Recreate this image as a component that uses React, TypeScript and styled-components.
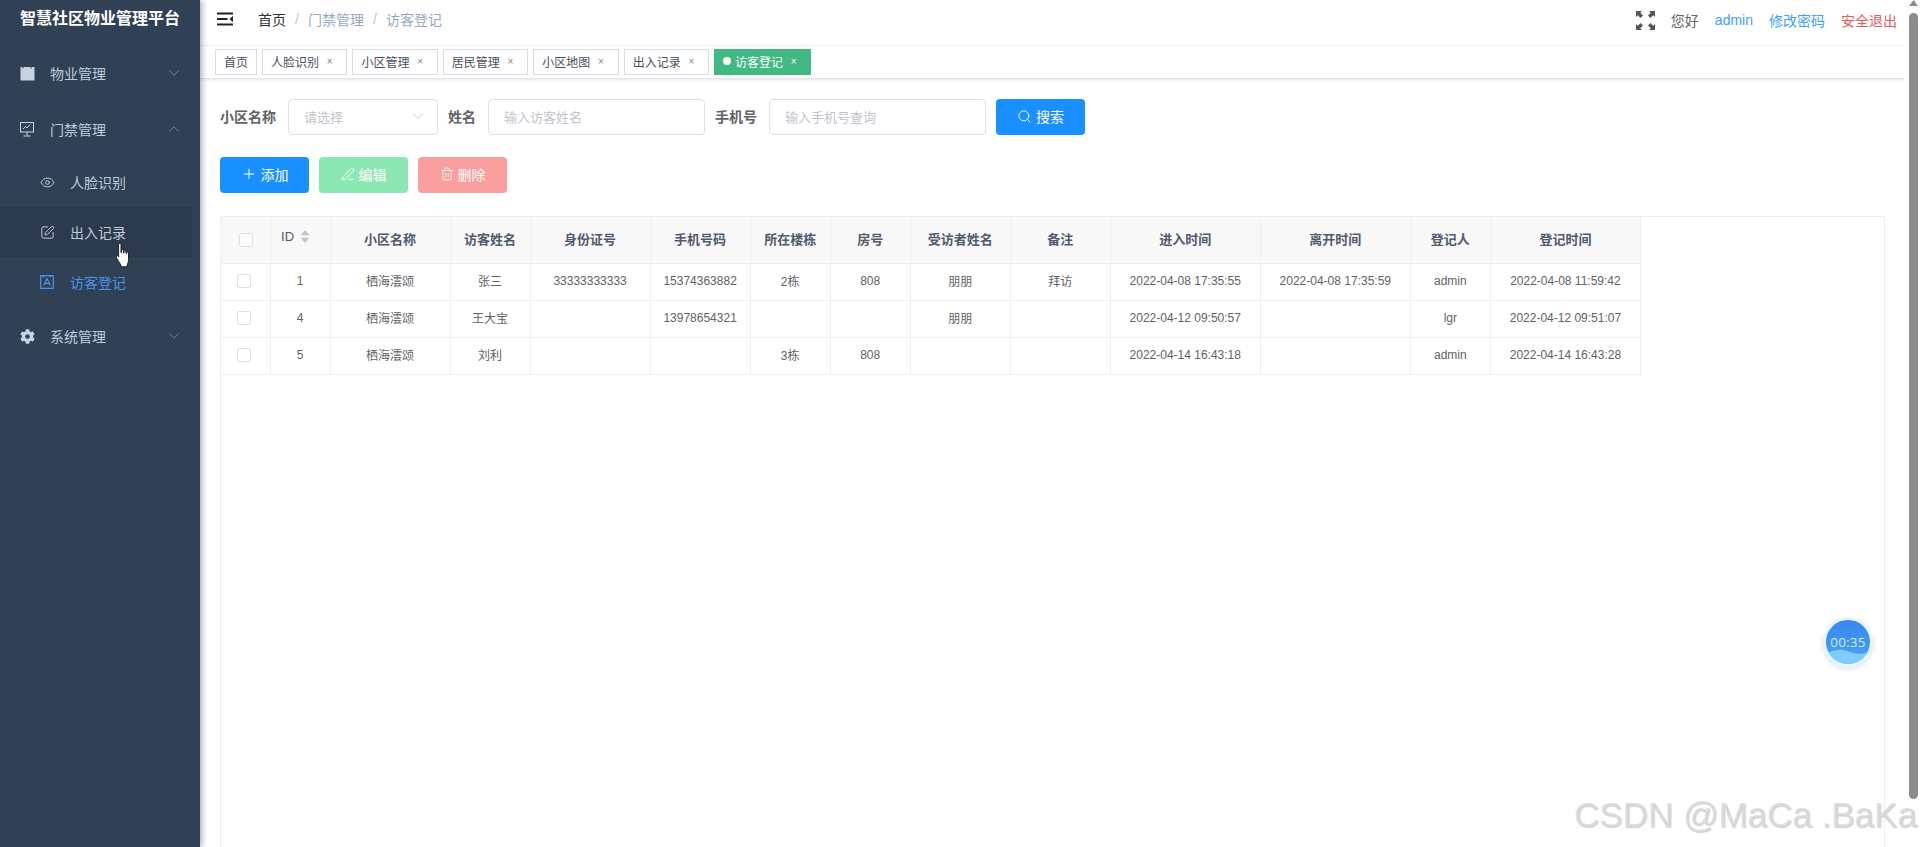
import React from "react";
import styled, { createGlobalStyle } from "styled-components";
import { ChevronDown, ChevronUp, Eye, Plus, Search, SquarePen, Trash2, PenLine } from "lucide-react";
import { FaCog } from "react-icons/fa";

const FONT = `"Liberation Sans", "Noto Sans CJK SC", sans-serif`;

const Global = createGlobalStyle`
  html, body { margin: 0; padding: 0; height: 100%; overflow: hidden; background: #fff; }
  body { font-family: ${FONT}; color: #606266; }
  * { box-sizing: border-box; }
`;

const Shell = styled.div`
  position: relative;
  display: grid;
  grid-template-columns: 200px 1fr 16px;
  width: 1920px;
  height: 847px;
  overflow: hidden;
`;

/* Sidebar */
const Sidebar = styled.aside`
  position: relative;
  z-index: 2;
  background: #304156;
  box-shadow: 2px 0 6px rgba(0, 21, 41, 0.35);
  color: #bfcbd9;
  font-size: 14px;
`;
const Brand = styled.div`
  height: 45px;
  padding-top: 9px;
  padding-left: 20px;
  color: #fff;
  font-size: 16px;
  font-weight: 700;
  line-height: 20px;
  white-space: nowrap;
`;
const MenuRow = styled.div`
  display: flex;
  align-items: center;
  height: 56px;
  padding: 0 17px 0 20px;
`;
const MenuIcon = styled.span`
  display: flex;
  width: 30px;
  flex: none;
  align-items: center;
  color: #c6d4e2;
`;
const MenuLabel = styled.span`
  flex: 1;
`;
const SubMenu = styled.div`
  margin-bottom: 1px;
`;
const SubRow = styled.div<{ $hover?: boolean; $active?: boolean }>`
  display: flex;
  align-items: center;
  height: 50px;
  padding-left: 40px;
  margin-right: 8px;
  background: ${(p) => (p.$hover ? "#2b3a4c" : "transparent")};
  color: ${(p) => (p.$active ? "#4a95e8" : "#bfcbd9")};
`;
const SubIcon = styled.span`
  display: flex;
  width: 30px;
  flex: none;
  align-items: center;
`;
const HandCursor = styled.svg`
  position: absolute;
  left: 115px;
  top: 243px;
  z-index: 3;
`;

/* Main column */
const Main = styled.main`
  display: flex;
  flex-direction: column;
  min-width: 0;
  height: 847px;
`;
const Header = styled.header`
  display: flex;
  align-items: center;
  height: 46px;
  padding: 0 7px 7px 17px;
  font-size: 14px;
  border-bottom: 1px solid #f4f4f4;
`;
const Crumbs = styled.nav`
  display: flex;
  flex: 1;
  align-items: center;
  margin-left: 25px;
  color: #97a8be;
`;
const Crumb = styled.span<{ $strong?: boolean }>`
  color: ${(p) => (p.$strong ? "#303133" : "#97a8be")};
`;
const CrumbSep = styled.span`
  width: 22px;
  line-height: 20px;
  text-align: center;
  color: #c0c4cc;
`;
const HeadLinks = styled.div`
  display: flex;
  align-items: center;
  gap: 16px;
  padding-top: 2px;
`;
const HeadLink = styled.span<{ $color: string }>`
  color: ${(p) => p.$color};
`;
const Tabs = styled.div`
  display: flex;
  gap: 5px;
  height: 33px;
  padding: 3px 0 0 15px;
  border-bottom: 1px solid #e2e4e8;
  box-shadow: 0 1px 3px rgba(0, 0, 0, 0.1);
`;
const Tab = styled.div<{ $active?: boolean }>`
  display: flex;
  align-items: center;
  height: 26px;
  padding: 0 8px 2px;
  font-size: 12px;
  border: 1px solid ${(p) => (p.$active ? "#42b983" : "#d8dce5")};
  background: ${(p) => (p.$active ? "#42b983" : "#fff")};
  color: ${(p) => (p.$active ? "#fff" : "#495060")};
`;
const TabDot = styled.i`
  width: 8px;
  height: 8px;
  margin-right: 4px;
  border-radius: 50%;
  background: #fff;
`;
const TabClose = styled.span<{ $active?: boolean }>`
  width: 19.4px;
  padding-left: 2px;
  text-align: center;
  font-size: 10px;
  color: ${(p) => (p.$active ? "#fff" : "#7c8492")};
`;
const Content = styled.section`
  display: flex;
  flex: 1;
  flex-direction: column;
  min-height: 0;
  padding: 20px 19px 0 20px;
`;
const Filters = styled.form`
  display: flex;
  align-items: center;
  height: 36px;
  margin: 0 0 22px;
`;
const FieldLabel = styled.label`
  margin-right: 12px;
  padding-bottom: 2px;
  font-size: 14px;
  font-weight: 700;
  color: #606266;
`;
const Field = styled.div<{ $width: number }>`
  display: flex;
  align-items: center;
  justify-content: space-between;
  width: ${(p) => p.$width}px;
  height: 36px;
  margin-right: 10px;
  padding: 0 9px 2px 15px;
  font-size: 13px;
  color: #c0c4cc;
  background: #fff;
  border: 1px solid #dcdfe6;
  border-radius: 4px;
`;
const Toolbar = styled.div`
  display: flex;
  gap: 10px;
  margin-bottom: 23px;
`;
const Btn = styled.button<{ $bg: string }>`
  display: flex;
  align-items: center;
  justify-content: center;
  gap: 4px;
  width: 89px;
  height: 36px;
  padding: 0 0 2px;
  font-family: ${FONT};
  font-size: 14px;
  color: #fff;
  background: ${(p) => p.$bg};
  border: 0;
  border-radius: 4px;
`;
const TableFrame = styled.div`
  flex: 1;
  min-height: 0;
  border: 1px solid #ebeef5;
  border-bottom: 0;
`;
const DataTable = styled.table`
  width: 1420px;
  table-layout: fixed;
  border-collapse: collapse;
  font-size: 12px;
`;
const Th = styled.th`
  height: 46px;
  padding: 0 0 2px;
  font-size: 13px;
  font-weight: 700;
  color: #515a6e;
  background: #f8f8f9;
  border: 1px solid #ebeef5;
  border-top: 0;
  &:first-child { border-left: 0; }
`;
const Td = styled.td`
  height: 37px;
  padding: 0 0 2px;
  text-align: center;
  color: #606266;
  border: 1px solid #ebeef5;
  &:first-child { border-left: 0; }
`;
const Check = styled.i<{ $head?: boolean }>`
  display: inline-block;
  width: 14px;
  height: 14px;
  vertical-align: middle;
  background: #fff;
  border: 1px solid #dcdfe6;
  border-radius: 2px;
  ${(p) => (p.$head ? "margin-left: 2px;" : "margin-left: -2px;")}
`;
const IdHead = styled.span`
  display: inline-flex;
  align-items: center;
  gap: 6px;
  padding-bottom: 5px;
  margin-left: -9px;
  font-weight: 400;
  font-size: 13px;
`;
const Scrollbar = styled.div`
  display: flex;
  flex-direction: column;
  align-items: center;
  padding: 0 0 48px 2px;
  background: #fff;
`;
const ScrollArrow = styled.svg`
  flex: none;
  margin-bottom: 7px;
`;
const ScrollThumb = styled.div`
  flex: 1;
  width: 9px;
  border-radius: 5px;
  background: #8b8b8b;
`;

/* Overlays */
const Timer = styled.div`
  position: absolute;
  left: 1823px;
  top: 617px;
  z-index: 4;
  display: flex;
  align-items: center;
  justify-content: center;
  width: 50px;
  height: 50px;
  overflow: hidden;
  border: 3px solid #e6f5ff;
  border-radius: 50%;
  box-shadow: 0 2px 5px rgba(90, 150, 210, 0.25);
  background: linear-gradient(180deg, #3a86ee 0%, #3f98f2 60%, #55aef5 100%);
`;
const TimerWave = styled.svg`
  position: absolute;
  left: 0;
  bottom: 0;
`;
const TimerText = styled.span`
  position: relative;
  font-family: "Open Sans", ${FONT};
  font-size: 13.5px;
  letter-spacing: 0.2px;
  color: #d2efff;
`;
const Watermark = styled.div`
  position: absolute;
  left: 1574px;
  top: 795px;
  z-index: 5;
  font-family: "Liberation Sans", sans-serif;
  font-size: 35px;
  line-height: 40px;
  white-space: nowrap;
  color: rgba(218, 218, 218, 0.8);
  text-shadow: 1px 1px 1px rgba(170, 170, 170, 0.55);
`;

const menuIconProps = { size: 15, strokeWidth: 1.6 };

const ClapIcon = () => (
  <svg width="15" height="15" viewBox="0 0 15 15">
    <path d="M0.5 1h2v1.6h1V1h7v1.6h1V1h3v13.5H.5z" fill="#c6d4e2" />
  </svg>
);
const MonitorIcon = () => (
  <svg width="14" height="15" viewBox="0 0 14 15" fill="none" stroke="#c6d4e2" strokeWidth="1">
    <rect x="0.5" y="0.5" width="13" height="9.5" />
    <path d="M3 7l2.5-2.5 1.5 1.5L10 2.5M7 10v4M3.5 14h7" />
  </svg>
);
const PortraitIcon = () => (
  <svg width="14" height="14" viewBox="0 0 14 14" fill="none" stroke="#4a95e8" strokeWidth="1.2">
    <path d="M.7.7h2.4v1h1V.7h5.8v1h1v-1h2.4v12.6H.7z" />
    <path d="M3.7 10.5L7 3.6l3.3 6.9M5 8.4h4" />
  </svg>
);
const MenuToggle = () => (
  <svg width="16" height="14" viewBox="0 0 16 14">
    <path d="M0 .5h16v1.9H0zM0 6h10.5v1.9H0zM0 11.6h16v1.9H0zM16 4v6l-3.6-3z" fill="#222" />
  </svg>
);
const Fullscreen = () => (
  <svg width="19" height="19" viewBox="0 0 19 19" fill="#555">
    <path d="M0 0h6L4.2 1.8 7 4.6 4.6 7 1.8 4.2 0 6zM19 0v6l-1.8-1.8L14.4 7 12 4.6l2.8-2.8L13 0zM0 19v-6l1.8 1.8L4.6 12 7 14.4l-2.8 2.8L6 19zM19 19h-6l1.8-1.8L12 14.4l2.4-2.4 2.8 2.8L19 13z" />
  </svg>
);
const SortIcon = () => (
  <svg width="10" height="13" viewBox="0 0 10 13" fill="#c0c4cc">
    <path d="M5 0l4.5 5.2h-9zM5 13L.5 7.8h9z" />
  </svg>
);

const tabs = ["人脸识别", "小区管理", "居民管理", "小区地图", "出入记录"];
const widths = [49, 60, 120, 80, 120, 100, 80, 80, 100, 100, 150, 150, 80, 150];
const heads = ["小区名称", "访客姓名", "身份证号", "手机号码", "所在楼栋", "房号", "受访者姓名", "备注", "进入时间", "离开时间", "登记人", "登记时间"];
const rows = [
  ["1", "栖海澐颂", "张三", "33333333333", "15374363882", "2栋", "808", "朋朋", "拜访", "2022-04-08 17:35:55", "2022-04-08 17:35:59", "admin", "2022-04-08 11:59:42"],
  ["4", "栖海澐颂", "王大宝", "", "13978654321", "", "", "朋朋", "", "2022-04-12 09:50:57", "", "lgr", "2022-04-12 09:51:07"],
  ["5", "栖海澐颂", "刘利", "", "", "3栋", "808", "", "", "2022-04-14 16:43:18", "", "admin", "2022-04-14 16:43:28"],
];

export default function App() {
  return (
    <Shell>
      <Global />
      <Sidebar>
        <Brand>智慧社区物业管理平台</Brand>
        <MenuRow>
          <MenuIcon><ClapIcon /></MenuIcon>
          <MenuLabel>物业管理</MenuLabel>
          <ChevronDown size={18} strokeWidth={1} color="#8a9bb0" />
        </MenuRow>
        <MenuRow>
          <MenuIcon><MonitorIcon /></MenuIcon>
          <MenuLabel>门禁管理</MenuLabel>
          <ChevronUp size={18} strokeWidth={1} color="#8a9bb0" />
        </MenuRow>
        <SubMenu>
          <SubRow>
            <SubIcon><Eye {...menuIconProps} /></SubIcon>
            人脸识别
          </SubRow>
          <SubRow $hover>
            <SubIcon><SquarePen {...menuIconProps} /></SubIcon>
            出入记录
          </SubRow>
          <SubRow $active>
            <SubIcon><PortraitIcon /></SubIcon>
            访客登记
          </SubRow>
        </SubMenu>
        <MenuRow>
          <MenuIcon><FaCog size={15} /></MenuIcon>
          <MenuLabel>系统管理</MenuLabel>
          <ChevronDown size={18} strokeWidth={1} color="#8a9bb0" />
        </MenuRow>
      </Sidebar>
      <HandCursor width="17" height="25" viewBox="0 0 17 25">
        <path
          d="M3.6 1.6c0-1.4 2.4-1.4 2.4 0v8l.4.1V7.6c0-1.2 2.2-1.2 2.2 0v2.4l.4.1V8.6c0-1.2 2.1-1.2 2.1 0v2l.4.1V9.8c0-1.1 2-1.1 2 0v7c0 3.4-1.4 4.4-1.7 7H6.4c-.5-2.6-2.4-4.4-4.4-8-.8-1.4-.8-2.6.2-3 1-.4 1.6.6 1.4 1.2z"
          fill="#fff"
          stroke="#222"
          strokeWidth="1"
        />
      </HandCursor>
      <Main>
        <Header>
          <MenuToggle />
          <Crumbs>
            <Crumb $strong>首页</Crumb>
            <CrumbSep>/</CrumbSep>
            <Crumb>门禁管理</Crumb>
            <CrumbSep>/</CrumbSep>
            <Crumb>访客登记</Crumb>
          </Crumbs>
          <HeadLinks>
            <Fullscreen />
            <HeadLink $color="#666">您好</HeadLink>
            <HeadLink $color="#409eff">admin</HeadLink>
            <HeadLink $color="#409eff">修改密码</HeadLink>
            <HeadLink $color="#e05b5b">安全退出</HeadLink>
          </HeadLinks>
        </Header>
        <Tabs>
          <Tab>首页</Tab>
          {tabs.map((t) => (
            <Tab key={t}>
              {t}
              <TabClose>×</TabClose>
            </Tab>
          ))}
          <Tab $active>
            <TabDot />
            访客登记
            <TabClose $active>×</TabClose>
          </Tab>
        </Tabs>
        <Content>
          <Filters>
            <FieldLabel>小区名称</FieldLabel>
            <Field $width={150}>
              请选择
              <ChevronDown size={20} strokeWidth={1} color="#c0c4cc" />
            </Field>
            <FieldLabel>姓名</FieldLabel>
            <Field $width={217}>输入访客姓名</Field>
            <FieldLabel>手机号</FieldLabel>
            <Field $width={217}>输入手机号查询</Field>
            <Btn type="button" $bg="#1890ff">
              <Search size={15} strokeWidth={1.5} />
              搜索
            </Btn>
          </Filters>
          <Toolbar>
            <Btn type="button" $bg="#1890ff">
              <Plus size={16} strokeWidth={1.5} />
              添加
            </Btn>
            <Btn type="button" $bg="#8ce8b2">
              <PenLine size={14} strokeWidth={1.5} />
              编辑
            </Btn>
            <Btn type="button" $bg="#fb9e9e">
              <Trash2 size={14} strokeWidth={1.5} />
              删除
            </Btn>
          </Toolbar>
          <TableFrame>
            <DataTable>
              <colgroup>
                {widths.map((w, i) => (
                  <col key={i} style={{ width: w }} />
                ))}
              </colgroup>
              <thead>
                <tr>
                  <Th><Check $head /></Th>
                  <Th>
                    <IdHead>ID <SortIcon /></IdHead>
                  </Th>
                  {heads.map((h) => (
                    <Th key={h}>{h}</Th>
                  ))}
                </tr>
              </thead>
              <tbody>
                {rows.map((r) => (
                  <tr key={r[0]}>
                    <Td><Check /></Td>
                    {r.map((c, i) => (
                      <Td key={i}>{c}</Td>
                    ))}
                  </tr>
                ))}
              </tbody>
            </DataTable>
          </TableFrame>
        </Content>
      </Main>
      <Scrollbar>
        <ScrollArrow width="9" height="6" viewBox="0 0 9 6">
          <path d="M4.5 0L9 6H0z" fill="#8b8b8b" />
        </ScrollArrow>
        <ScrollThumb />
      </Scrollbar>
      <Timer>
        <TimerWave width="44" height="17" viewBox="0 0 44 17">
          <path d="M0 7C10 1 18 2 27 6c6 2 12 1 17-2v13H0z" fill="#7fcdfb" />
        </TimerWave>
        <TimerText>00:35</TimerText>
      </Timer>
      <Watermark>CSDN @MaCa .BaKa</Watermark>
    </Shell>
  );
}
